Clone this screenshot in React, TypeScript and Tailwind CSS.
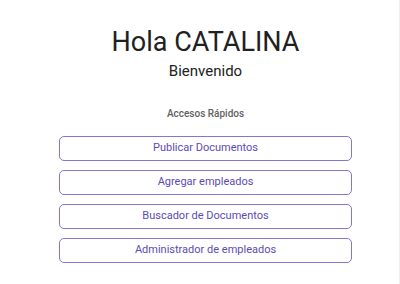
const links = [
  "Publicar Documentos",
  "Agregar empleados",
  "Buscador de Documentos",
  "Administrador de empleados",
];

export default function App() {
  return (
    <div
      className="w-[400px] h-[284px] bg-white border-r border-[#efefef] pl-[12px] overflow-hidden"
      style={{ fontFamily: "Roboto, 'Noto Sans', sans-serif" }}
    >
      <div className="flex flex-col items-center pt-[26px]">
        <h1 className="text-[27px] leading-[32px] text-[#212121]">Hola CATALINA</h1>
        <p className="text-[15px] leading-[18px] text-[#212121] mt-[4px]">Bienvenido</p>
        <p className="text-[10px] leading-[14px] font-medium text-[#616161] mt-[27px]">Accesos Rápidos</p>
        <div className="flex flex-col gap-[9px] mt-[15px] w-[293px]">
          {links.map((l) => (
            <button
              key={l}
              className="h-[25px] w-full rounded-[5px] border border-[#8277d2] text-[11px] text-[#5b4cb2] bg-white"
            >
              {l}
            </button>
          ))}
        </div>
      </div>
    </div>
  );
}
